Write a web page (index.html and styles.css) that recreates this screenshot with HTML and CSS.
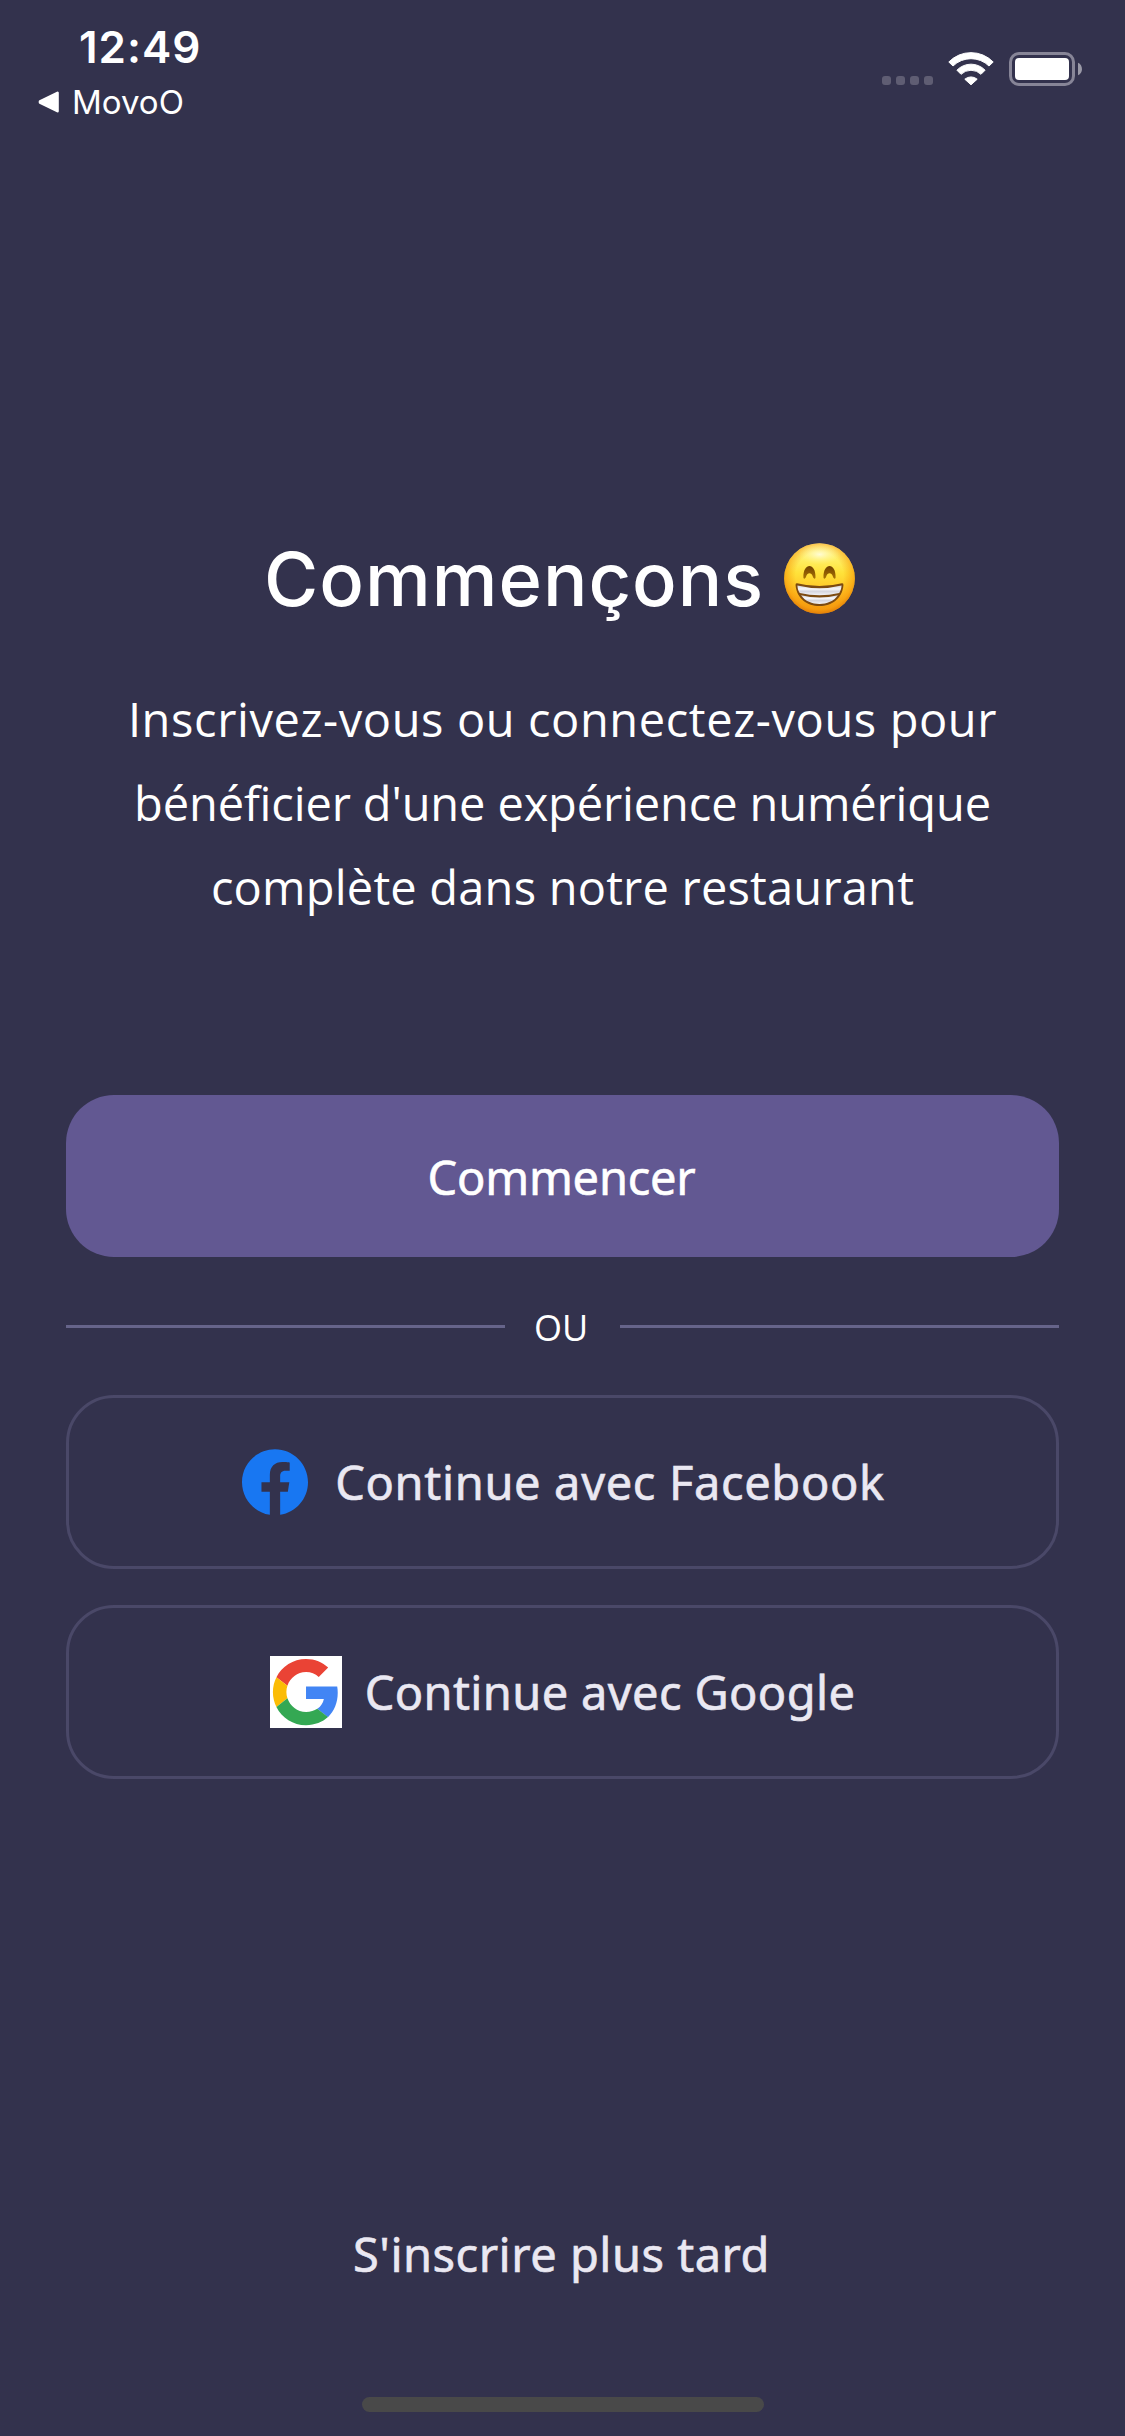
FILE: index.html
```html
<!DOCTYPE html>
<html lang="fr">
<head>
<meta charset="utf-8">
<title>Commençons</title>
<link rel="stylesheet" href="styles.css">
</head>
<body>
<div class="screen">
  <header class="status">
    <div class="status-left">
      <div class="clock">12:49</div>
      <div class="back">
        <svg class="back-arrow" width="22" height="22" viewBox="0 0 22 22"><path d="M2 10.3 19.5 1.8V20.2L2 11.5Z" fill="#fff" stroke="#fff" stroke-width="2.6" stroke-linejoin="round"/></svg>
        <span>MovoO</span>
      </div>
    </div>
    <div class="status-right">
      <svg class="dots" width="51" height="9" viewBox="0 0 51 9" fill="#5f5d73"><rect width="9" height="9" rx="3"/><rect x="14" width="9" height="9" rx="3"/><rect x="28" width="9" height="9" rx="3"/><rect x="42" width="9" height="9" rx="3"/></svg>
      <svg class="wifi" width="46" height="34" viewBox="0 0 46 34" fill="#fff" stroke="#fff" stroke-width="1" stroke-linejoin="round"><path d="M.8 10A31 31 0 0 1 45.2 10L41 14A25.8 25.8 0 0 0 5 14Z"/><path d="M8.9 18.2A19.5 19.5 0 0 1 37.1 18.2L33 22.3A14.4 14.4 0 0 0 13 22.3Z"/><path d="M16.8 27.2A9.6 9.6 0 0 1 29.2 27.2L23 32.8Z"/></svg>
      <svg class="battery" width="74" height="34" viewBox="0 0 74 34"><rect x="1.5" y="1.5" width="63" height="31" rx="8.5" fill="none" stroke="#878597" stroke-width="3"/><rect x="6" y="6" width="54" height="22" rx="4" fill="#fff"/><path d="M69 10.7C74.3 13 74.3 21 69 23.3Z" fill="#9a99a7"/></svg>
    </div>
  </header>

  <main class="content">
    <h1 class="title">
      <span>Commençons</span>
      <svg class="emoji" width="71" height="71" viewBox="0 0 212 212" role="img" aria-label="😁">
        <defs>
          <linearGradient id="face" x1="0" y1="0" x2="0" y2="1"><stop offset="0" stop-color="#fff39a"/><stop offset=".2" stop-color="#fff06a"/><stop offset=".42" stop-color="#ffe23a"/><stop offset=".7" stop-color="#ffc224"/><stop offset="1" stop-color="#ef9212"/></linearGradient>
          <radialGradient id="rim" cx=".5" cy=".46" r=".56"><stop offset=".6" stop-color="#f79c0a" stop-opacity="0"/><stop offset=".85" stop-color="#f79a0a" stop-opacity=".6"/><stop offset="1" stop-color="#d97206" stop-opacity=".95"/></radialGradient>
          <radialGradient id="shine"><stop offset="0" stop-color="#fffde0" stop-opacity=".9"/><stop offset="1" stop-color="#fff68c" stop-opacity="0"/></radialGradient>
          <linearGradient id="eye" x1="0" y1="0" x2="0" y2="1"><stop offset="0" stop-color="#704000"/><stop offset="1" stop-color="#a97405"/></linearGradient>
          <linearGradient id="teeth" x1="0" y1="0" x2="0" y2="1"><stop offset="0" stop-color="#d4d4dc"/><stop offset=".35" stop-color="#f7f7fa"/><stop offset=".6" stop-color="#d6d6de"/><stop offset="1" stop-color="#f2f2f6"/></linearGradient>
        </defs>
        <circle cx="106" cy="106" r="105.5" fill="url(#face)"/>
        <circle cx="106" cy="106" r="105.5" fill="url(#rim)"/>
        <ellipse cx="106" cy="34" rx="62" ry="30" fill="url(#shine)"/>
        <path d="M58 104C56 57 96 57 94 104C92 109 88 106 86 100C82 87 70 87 66 100C64 106 60 109 58 104Z" fill="url(#eye)"/>
        <path d="M118 104C116 57 156 57 154 104C152 109 148 106 146 100C142 87 130 87 126 100C124 106 120 109 118 104Z" fill="url(#eye)"/>
        <path d="M39 120Q106 137 173 120Q178 119 177.500 126C174 166 142 188 106 188S38 166 34.500 126Q34 119 39 120Z" fill="#7c4a10"/>
        <path d="M40 127Q106 143 172 127C171 138 168 144 165 149Q106 163 47 149C43 144 41 138 40 127Z" fill="url(#teeth)"/>
        <path d="M51 156Q106 169 161 156C149 174 128 182 106 182S63 174 51 156Z" fill="url(#teeth)"/>
      </svg>
    </h1>
    <p class="intro">
      <span class="line line-1">Inscrivez-vous ou connectez-vous pour</span>
      <span class="line line-2">bénéficier d'une expérience numérique</span>
      <span class="line line-3">complète dans notre restaurant</span>
    </p>
    <button class="btn primary">Commencer</button>
    <div class="divider"><span class="or">OU</span></div>
    <button class="btn social facebook">
      <svg width="66" height="66" viewBox="0 0 24 24"><path fill="#1877f2" d="M24 12.073c0-6.627-5.373-12-12-12s-12 5.373-12 12c0 5.990 4.388 10.954 10.125 11.854v-8.385H7.078v-3.470h3.047V9.430c0-3.007 1.792-4.669 4.533-4.669 1.312 0 2.686.235 2.686.235v2.953H15.830c-1.491 0-1.956.925-1.956 1.874v2.250h3.328l-.532 3.470h-2.796v8.385C19.612 23.027 24 18.062 24 12.073z"/></svg>
      <span>Continue avec Facebook</span>
    </button>
    <button class="btn social google">
      <svg width="72" height="72" viewBox="0 0 72 72"><rect width="72" height="72" fill="#fff"/><g transform="translate(2.900 2.900) scale(1.380)"><path fill="#ea4335" d="M24 9.500c3.540 0 6.710 1.220 9.210 3.600l6.850-6.850C35.900 2.380 30.470 0 24 0 14.620 0 6.510 5.380 2.560 13.220l7.980 6.190C12.430 13.720 17.740 9.500 24 9.500z"/><path fill="#4285f4" d="M46.980 24.550c0-1.570-.15-3.090-.38-4.550H24v9.020h12.940c-.58 2.960-2.260 5.480-4.780 7.180l7.730 6c4.510-4.180 7.090-10.360 7.090-17.650z"/><path fill="#fbbc05" d="M10.530 28.590c-.48-1.450-.76-2.990-.76-4.590s.27-3.140.76-4.590l-7.980-6.190C.92 16.460 0 20.120 0 24s.92 7.540 2.560 10.780l7.970-6.190z"/><path fill="#34a853" d="M24 48c6.480 0 11.930-2.130 15.890-5.810l-7.730-6c-2.150 1.450-4.920 2.300-8.160 2.300-6.260 0-11.570-4.220-13.470-9.910l-7.980 6.190C6.510 42.620 14.620 48 24 48z"/></g></svg>
      <span>Continue avec Google</span>
    </button>
  </main>

  <footer class="footer">
    <a class="later">S'inscrire plus tard</a>
    <div class="home-bar"></div>
  </footer>
</div>
</body>
</html>
```
FILE: styles.css
```css
* { box-sizing: border-box; }

body {
  margin: 0;
  background: #33324d;
  color: #fff;
  font-family: "Noto Sans", "Open Sans", sans-serif;
}

.screen {
  width: 1125px;
  height: 2436px;
  display: flex;
  flex-direction: column;
  overflow: hidden;
}

/* Status bar */
.status {
  height: 132px;
  display: flex;
  justify-content: space-between;
  padding: 21px 42px 0 38px;
  font-family: "Inter", sans-serif;
}

.clock {
  padding-left: 41px;
  font-size: 44px;
  font-weight: 600;
  line-height: 53px;
  letter-spacing: 1px;
}

.back {
  display: flex;
  align-items: center;
  gap: 12px;
  margin-top: 8px;
  font-size: 33px;
  font-weight: 400;
  line-height: 40px;
}

.status-right {
  display: flex;
  align-items: flex-end;
  height: 34px;
  margin-top: 31px;
}

.dots { margin: 0 15px 1px 0; }
.wifi { margin-right: 15px; }

/* Content */
.content {
  flex: 1;
  display: flex;
  flex-direction: column;
  padding: 402px 66px 0;
}

.title {
  display: flex;
  align-items: flex-start;
  gap: 20px;
  margin: 0;
  padding-left: 198px;
  font: 500 74px/90px "Inter", sans-serif;
  letter-spacing: 1px;
}

.emoji { margin-top: 9px; }

.intro {
  display: flex;
  flex-direction: column;
  align-items: center;
  margin: 53px 0 0;
  font: 400 47px/84px "Open Sans", sans-serif;
}

.line { white-space: nowrap; }
.line-1 { letter-spacing: 0.59px; }
.line-2 { letter-spacing: -0.13px; }
.line-3 { letter-spacing: 0.2px; }

.btn {
  display: flex;
  align-items: center;
  justify-content: center;
  width: 100%;
  border-radius: 48px;
  font: 400 47px/64px "Noto Sans", sans-serif;
  -webkit-text-stroke: 0.6px currentColor;
}

.primary {
  height: 162px;
  margin-top: 166px;
  padding: 2px 2px 0 0;
  border: 0;
  background: #625892;
  color: #fff;
  letter-spacing: -0.25px;
}

.divider {
  display: flex;
  align-items: center;
  height: 49px;
  margin: 45px 0 44px;
}

.divider::before,
.divider::after {
  content: "";
  flex: 1;
  height: 3px;
  background: #66648a;
}

.or {
  width: 115px;
  padding: 1px 3px 0 0;
  text-align: center;
  font: 400 36px/49px "Open Sans", sans-serif;
}

.social {
  height: 174px;
  padding: 0;
  border: 3px solid #4a4868;
  background: transparent;
  color: #eae8f2;
}

.facebook {
  gap: 27px;
  padding-left: 2px;
  letter-spacing: 0.65px;
}

.google {
  gap: 23px;
  margin-top: 36px;
  letter-spacing: 0.37px;
}

/* Footer */
.footer {
  display: flex;
  flex-direction: column;
  align-items: center;
  padding-bottom: 24px;
}

.later {
  margin: 0 2px 111px 0;
  color: #eae8f2;
  font-size: 47px;
  font-weight: 400;
  line-height: 64px;
  letter-spacing: 0.5px;
  -webkit-text-stroke: 0.6px currentColor;
}

.home-bar {
  width: 402px;
  height: 15px;
  border-radius: 8px;
  background: #494949;
}
```
